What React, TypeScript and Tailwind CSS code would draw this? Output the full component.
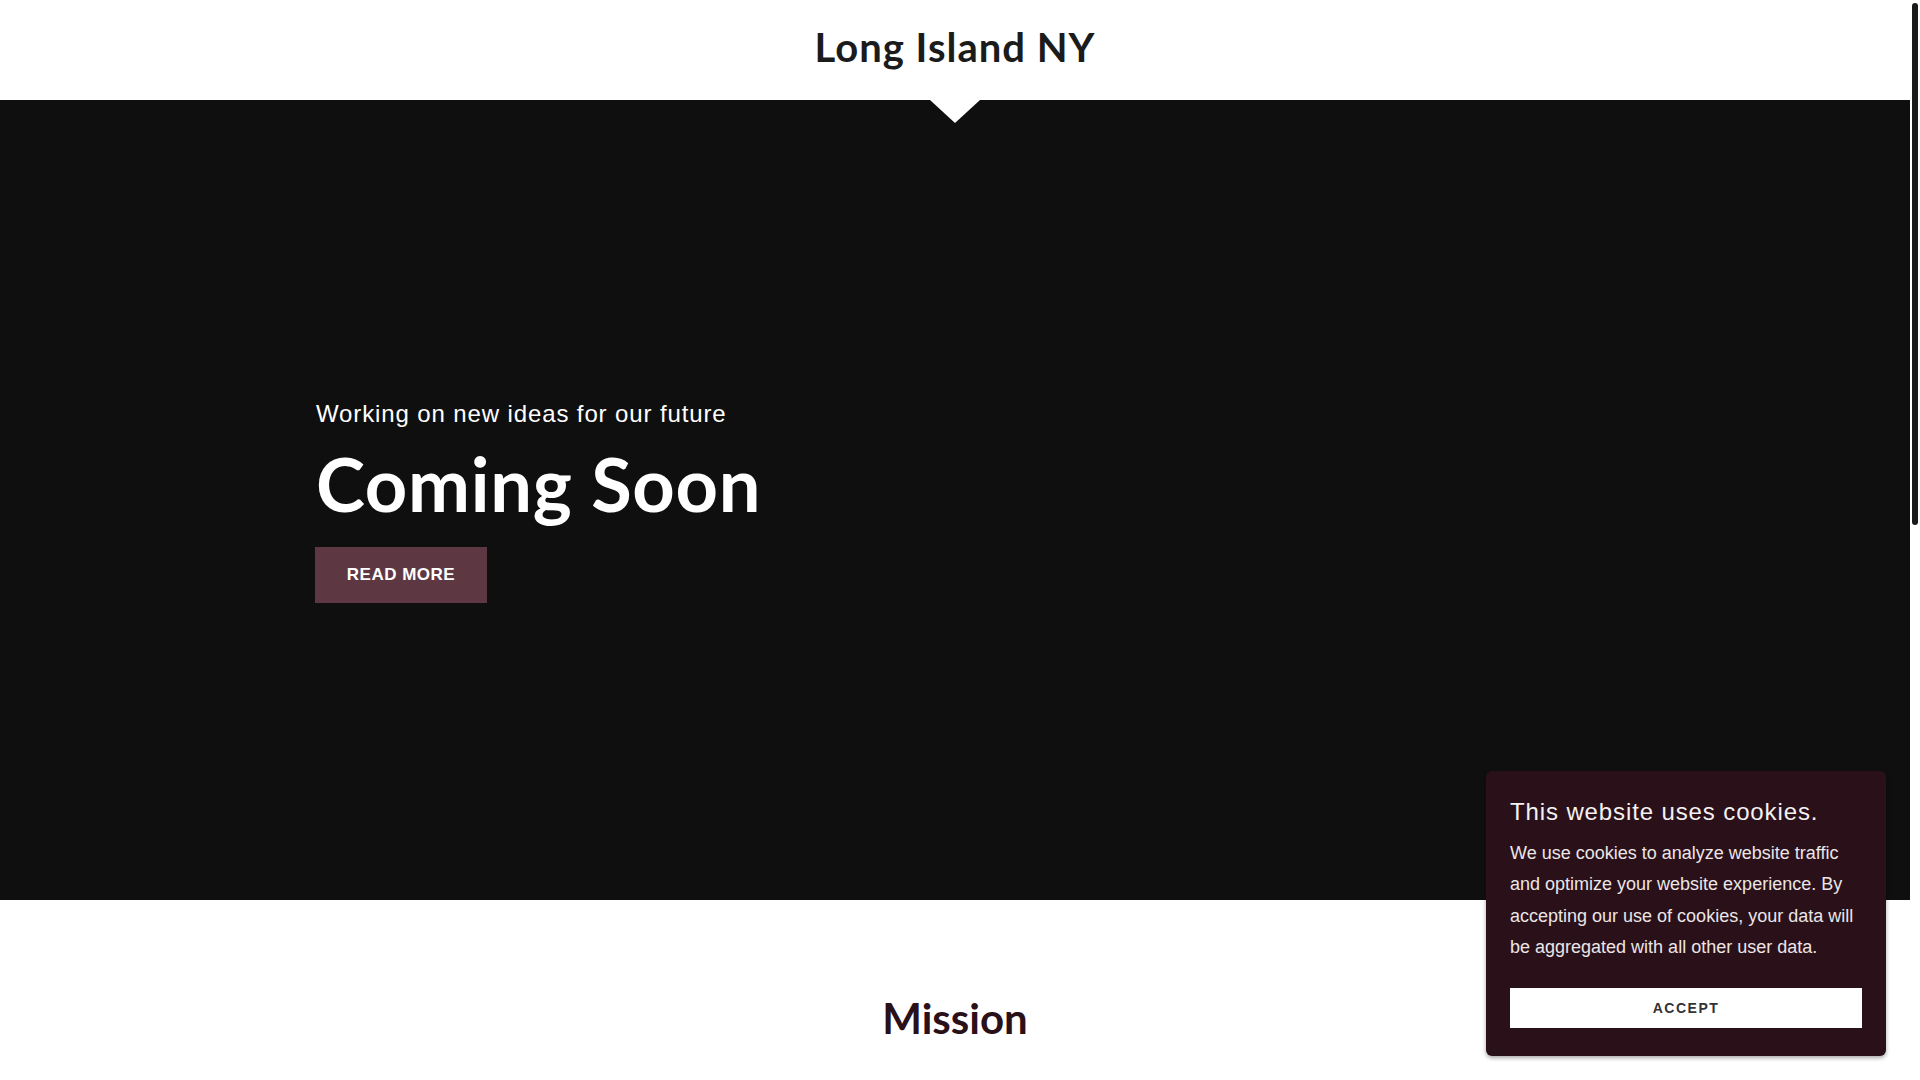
import React from "react";

export default function App() {
  const display = { fontFamily: "Lato, 'Noto Sans', sans-serif" };
  const body = { fontFamily: "'Liberation Sans', Arial, sans-serif" };
  return (
    <div className="flex w-[1920px] h-[1080px] overflow-hidden bg-white relative">
      <div className="w-[1910px] flex flex-col">
        <header className="h-[100px] flex justify-center items-start pt-[27px] bg-white">
          <h1 style={display} className="text-[40px] leading-[40px] font-bold tracking-[1px] text-[#1b1b1b]">
            Long Island NY
          </h1>
        </header>
        <section className="relative h-[800px] bg-[#0f0f0f] flex flex-col items-start pl-[316px] pt-[302px]">
          <svg className="absolute top-0 left-[930px]" width="50" height="23" viewBox="0 0 50 23">
            <polygon points="0,0 50,0 25,23" fill="#ffffff" />
          </svg>
          <p style={body} className="text-[24px] leading-[24px] tracking-[0.88px] text-white">
            Working on new ideas for our future
          </p>
          <h2 style={display} className="mt-[21px] text-[74px] leading-[74px] font-bold tracking-[0.7px] text-white">
            Coming Soon
          </h2>
          <button
            style={body}
            className="mt-[26px] -ml-[1px] w-[172px] h-[56px] bg-[#5d3843] text-white text-[17px] font-bold tracking-[0.5px] flex items-center justify-center"
          >
            READ MORE
          </button>
        </section>
        <section className="flex justify-center pt-[97px]">
          <h2 style={display} className="text-[42px] leading-[42px] font-bold text-[#2a1018]">
            Mission
          </h2>
        </section>
      </div>
      <div className="w-[10px] h-full bg-white pt-[3px] pl-[2px]">
        <div className="w-[6px] h-[522px] rounded-full bg-[#1a1a1a]" />
      </div>

      <div
        style={body}
        className="absolute right-[34px] bottom-[24px] w-[400px] h-[285px] rounded-[6px] bg-[#2a1018] px-[24px] pt-[24px] shadow-[0_2px_4px_rgba(0,0,0,0.35)]"
      >
        <div className="text-[24px] leading-[34px] tracking-[0.88px] text-[#f4f1f2]">
          This website uses cookies.
        </div>
        <p className="mt-[9px] text-[18px] leading-[31.25px] text-[#ebe6e7]">
          We use cookies to analyze website traffic and optimize your website experience. By accepting our use of cookies, your data will be aggregated with all other user data.
        </p>
        <button className="mt-[25px] w-[352px] h-[40px] bg-white text-[#333333] text-[14px] font-bold tracking-[1.5px] flex items-center justify-center">
          ACCEPT
        </button>
      </div>
    </div>
  );
}
